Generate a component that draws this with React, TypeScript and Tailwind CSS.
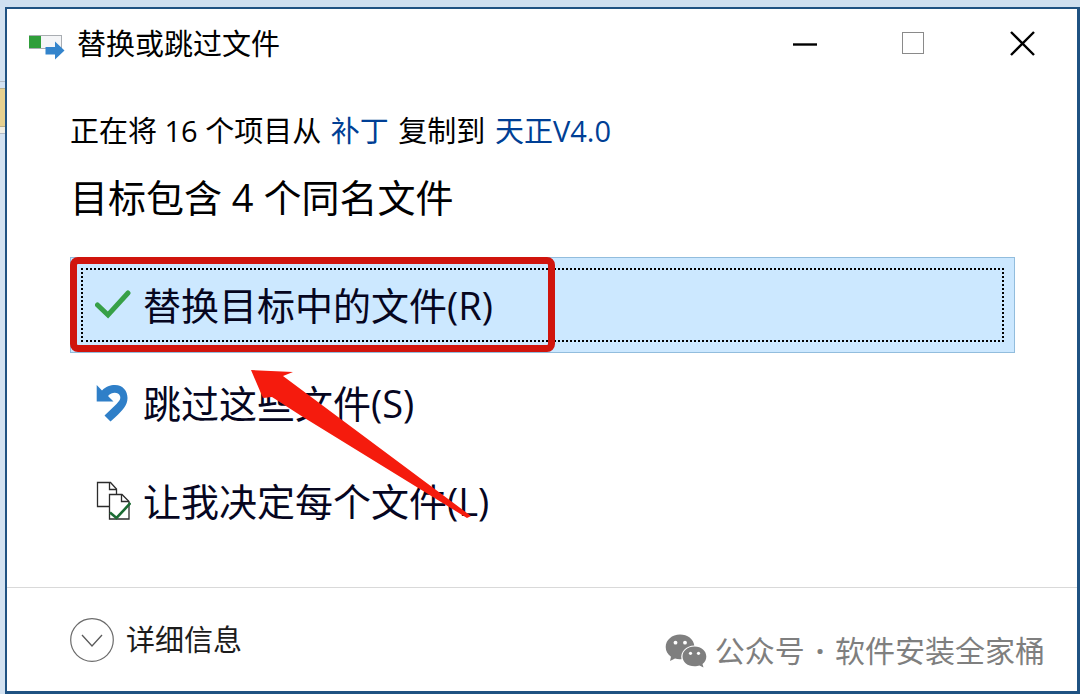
import { useState } from "react";
import type { ReactNode } from "react";

interface CopyAction {
  id: string;
  label: string;
  icon: ReactNode;
}

const TransferIcon = () => (
  <svg viewBox="0 0 36 26" className="h-[26px] w-9" aria-hidden="true">
    <rect x="0.5" y="0.5" width="32" height="13" fill="#f4f5f7" stroke="#a9adb2" />
    <rect x="0" y="1" width="12" height="12" fill="#2f9e3a" />
    <path d="M16.500 12H26V6.500L35.500 15.500L26 24.500V19.500H16.500Z" fill="#3384cc" />
  </svg>
);

const CheckIcon = () => (
  <svg viewBox="0 0 36 36" className="h-9 w-9" aria-hidden="true">
    <path
      d="M2.500 18L13 28L33 6"
      fill="none"
      stroke="#37a047"
      strokeWidth="5"
      strokeLinecap="round"
    />
  </svg>
);

const UndoIcon = () => (
  <svg viewBox="0 0 36 40" className="h-10 w-9" aria-hidden="true">
    <path
      d="M1.700 2L7 7.500C11 3.500 15 2 20 2C28 2 32.500 8 32.500 15C32.500 22 28 27 20.500 34L15.500 38.500L9.500 32.500L20 22.500C24.500 18 26 16 25 13C23.500 9 17 8.500 13 13L18.500 18.500H1.700Z"
      fill="#2f7fc8"
    />
  </svg>
);

const CompareIcon = () => (
  <svg viewBox="0 0 36 40" className="h-10 w-9" aria-hidden="true">
    <path d="M2.500 1.500H15.500L21.500 8V25.500H2.500Z" fill="#fff" stroke="#2c2c2c" strokeWidth="1.300" />
    <path d="M14.500 1.500V8.500H21.500" fill="none" stroke="#2c2c2c" strokeWidth="1.300" />
    <path d="M14.500 13.500H27L34 20.500V38H14.500Z" fill="#fff" stroke="#2c2c2c" strokeWidth="1.300" />
    <path d="M26.500 13.500V20.500H34" fill="none" stroke="#2c2c2c" strokeWidth="1.300" />
    <path d="M15 31.500L21.500 37L35.500 22" fill="none" stroke="#1b6b33" strokeWidth="2.600" />
  </svg>
);

const WeChatIcon = () => (
  <svg viewBox="0 0 42 34" className="h-[34px] w-[42px]" aria-hidden="true">
    <path
      d="M15 0.500C7 0.500 0.700 6 0.700 13C0.700 17 2.700 20.500 6 22.800L5 27L10 24.500C12 25.200 14 25.400 16.500 25.200C15 18 21 11.500 29.300 11.500C28.500 5 22.500 0.500 15 0.500Z"
      fill="#7f7f7f"
    />
    <path
      d="M29.500 12.500C22.500 12.500 17.500 17 17.500 22.500C17.500 28 22.500 32.300 29.500 32.300C31.500 32.300 33 32 34.500 31.500L38.500 33.500L37.500 30C40 28 41.300 25.500 41.300 22.500C41.300 17 36.500 12.500 29.500 12.500Z"
      fill="#7f7f7f"
    />
    <g fill="#fff">
      <circle cx="10.500" cy="8.700" r="1.900" />
      <circle cx="20" cy="8.700" r="1.900" />
      <circle cx="25.500" cy="19.300" r="1.600" />
      <circle cx="33.500" cy="19.300" r="1.600" />
    </g>
  </svg>
);

const ACTIONS: CopyAction[] = [
  { id: "replace", label: "替换目标中的文件(R)", icon: <CheckIcon /> },
  { id: "skip", label: "跳过这些文件(S)", icon: <UndoIcon /> },
  { id: "decide", label: "让我决定每个文件(L)", icon: <CompareIcon /> },
];

function TitleBar() {
  return (
    <header className="flex h-[70px] items-center pl-[22px]">
      <div className="pt-2">
        <TransferIcon />
      </div>
      <h1 className="flex-1 pl-3 text-[29px] leading-10">替换或跳过文件</h1>
      <div className="flex h-full">
        <button type="button" aria-label="最小化" className="flex w-[109px] items-center justify-center">
          <svg viewBox="0 0 26 26" className="h-[26px] w-[26px]">
            <path d="M1 13.500H25" stroke="#000" strokeWidth="2.400" />
          </svg>
        </button>
        <button type="button" aria-label="最大化" className="flex w-[109px] items-center justify-center">
          <svg viewBox="0 0 26 26" className="h-[26px] w-[26px]">
            <rect x="1.500" y="1.500" width="21" height="21" fill="none" stroke="#8a8a8a" />
          </svg>
        </button>
        <button type="button" aria-label="关闭" className="flex w-[109px] items-center justify-center">
          <svg viewBox="0 0 26 26" className="h-[26px] w-[26px]">
            <path d="M1 1L24 24M24 1L1 24" stroke="#000" strokeWidth="2.400" />
          </svg>
        </button>
      </div>
    </header>
  );
}

export default function App() {
  const [selected, setSelected] = useState("replace");
  const [expanded, setExpanded] = useState(false);

  return (
    <div className="flex min-h-screen bg-[#cfe0f0] pt-[7px] font-['Open_Sans','Noto_Sans_CJK_SC',sans-serif] text-black">
      {/* Edge of the window behind */}
      <div className="flex w-[5px] flex-col bg-[#d3e2f1] pt-[74px]" aria-hidden="true">
        <div className="h-[7px] border-t border-[#b4bcc6]" />
        <div className="h-[39px] border-y border-[#b9b08a] bg-[#e6d190]" />
        <div className="h-[7px] border-b border-[#b4bcc6] bg-[#f1efe4]" />
      </div>

      <div className="relative flex flex-1 flex-col border-2 border-r-[3px] border-b-[3px] border-[#1f5282] bg-white">
        <TitleBar />

        <main className="flex-1 pr-[62px] pl-[63px] pt-8 pb-9">
          <p className="text-[29px] leading-10">
            正在将 16 个项目从{" "}
            <a href="#source" className="px-0.5 text-[#003f95]">
              补丁
            </a>{" "}
            复制到{" "}
            <a href="#target" className="px-0.5 text-[#003f95]">
              天正V4.0
            </a>
          </p>
          <h2 className="mt-5 text-[38px] leading-[52px]">目标包含 4 个同名文件</h2>

          <div className="relative mt-[34px] flex flex-col gap-0.5">
            {ACTIONS.map((a) => (
              <button
                key={a.id}
                type="button"
                onClick={() => setSelected(a.id)}
                className={`flex h-24 border p-2.5 text-left text-[38px] leading-[52px] text-[#06061f] outline-none ${
                  selected === a.id ? "border-[#92bddd] bg-[#cce8ff]" : "border-transparent"
                }`}
              >
                <span
                  className={`flex h-full flex-1 items-center gap-3 border-2 border-dotted pl-3 ${
                    selected === a.id ? "border-black" : "border-transparent"
                  }`}
                >
                  {a.icon}
                  {a.label}
                </span>
              </button>
            ))}

            {/* Red highlight and pointer drawn over the list */}
            <div className="pointer-events-none absolute top-0 left-0 h-[95px] w-[485px] rounded-lg border-7 border-[#d0140c]" />
            <svg
              viewBox="0 0 224 150"
              className="pointer-events-none absolute top-[112px] left-[180px] h-[150px] w-[224px]"
              aria-hidden="true"
            >
              <path d="M1 1L43 3L33 7L221 147L217 149L53 48L22 28L13 29Z" fill="#f51b0d" />
            </svg>
          </div>
        </main>

        <footer className="relative flex h-[104px] items-center border-t border-[#d9d9d9] pl-[63px]">
          <button
            type="button"
            onClick={() => setExpanded(!expanded)}
            aria-expanded={expanded}
            className="flex items-center gap-3 text-[29px] leading-10 text-[#1c1c1c]"
          >
            <svg viewBox="0 0 44 44" className="h-11 w-11" aria-hidden="true">
              <circle cx="22" cy="22" r="21.300" fill="none" stroke="#6b6b6b" strokeWidth="1.200" />
              <path d="M12 17L22 28L32 17" fill="none" stroke="#5a5a5a" strokeWidth="1.300" />
            </svg>
            详细信息
          </button>
          <div className="absolute right-8 bottom-5 flex items-center gap-2 text-[30px] leading-10 text-[#7f7f7f]">
            <WeChatIcon />
            <span>
              公众号<span className="px-[3px] font-bold"> · </span>软件安装全家桶
            </span>
          </div>
        </footer>
      </div>
    </div>
  );
}
